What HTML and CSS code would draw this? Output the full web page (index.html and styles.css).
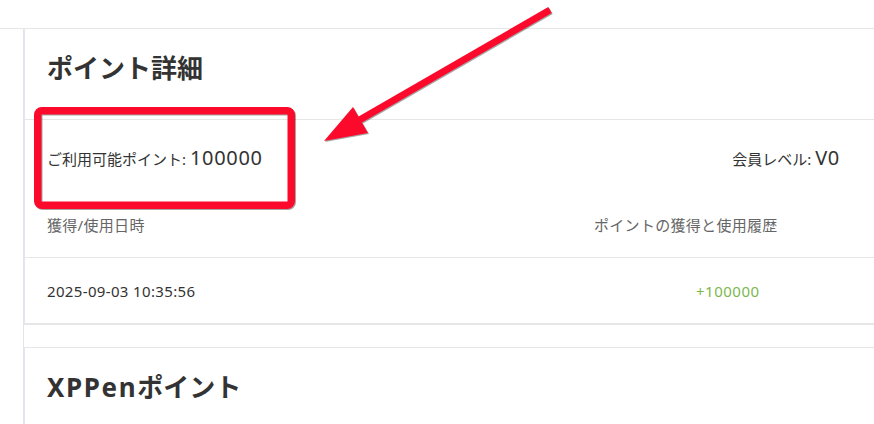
FILE: index.html
```html
<!DOCTYPE html>
<html lang="ja">
<head>
  <meta charset="UTF-8">
  <meta name="viewport" content="width=device-width, initial-scale=1.0">
  <title>ポイント詳細</title>
  <link rel="stylesheet" href="styles.css">
</head>
<body>
  <div class="topbar"></div>

  <div class="layout">
    <main class="main">
      <!-- Point details -->
      <section class="card card-first">
        <div class="card-head">
          <h2>ポイント詳細</h2>
        </div>
        <div class="summary">
          <div class="summary-item">ご利用可能ポイント: <span class="big">100000</span></div>
          <div class="summary-item">会員レベル: <span class="big">V0</span></div>
        </div>
        <div class="history-row history-head">
          <div>獲得/使用日時</div>
          <div>ポイントの獲得と使用履歴</div>
        </div>
        <div class="history-row">
          <div class="date">2025-09-03 10:35:56</div>
          <div class="amount plus">+100000</div>
        </div>
      </section>

      <section class="card">
        <div class="card-head">
          <h2><span class="brand">XPPen</span>ポイント</h2>
        </div>
      </section>
    </main>
  </div>

  <!-- Screenshot annotation -->
  <svg class="annotation" width="874" height="424" viewBox="0 0 874 424">
    <rect x="37.75" y="110.75" width="253.5" height="94.5" rx="4" fill="none" stroke="#fc0a2c" stroke-width="7.5"/>
    <line x1="550" y1="10" x2="356" y2="122" stroke="#fc0a2c" stroke-width="7"/>
    <polygon points="324,141 353,107 368,133" fill="#fc0a2c"/>
  </svg>
</body>
</html>
```

FILE: styles.css
```css
body {
  margin: 0;
  padding: 0;
  font-family: "Noto Sans", "Noto Sans CJK JP", sans-serif;
  background-color: #fff;
  color: #333;
  overflow: hidden;
}

.topbar {
  height: 28px;
  border-bottom: 1px solid #e6e6e6;
}

.layout {
  padding-left: 23px;
}

.main {
  border-left: 1px solid #e1e5ea;
  min-height: 395px;
}

.card {
  border-top: 1px solid #e6e6e6;
  border-left: 1px solid #e3e6ea;
  border-bottom: 1px solid #e6e6e6;
  margin-bottom: 22px;
}

.card-first {
  border-top: none;
}

.card-head {
  padding: 21px 34px 33px 22px;
  border-bottom: 1px solid #e6e6e6;
}

.card-head h2 {
  margin: 0;
  font-size: 26px;
  line-height: 36px;
  font-weight: 700;
  color: #333;
}

.brand {
  letter-spacing: 1.6px;
}

/* Summary line */
.summary {
  height: 71px;
  padding: 3px 34px 0 22px;
  box-sizing: border-box;
  display: flex;
  justify-content: space-between;
  align-items: center;
  font-size: 15px;
  color: #333;
}

.big {
  font-size: 20px;
  letter-spacing: 0.7px;
}

/* History table */
.history-row {
  display: grid;
  grid-template-columns: 1fr 246px;
  align-items: center;
  height: 66px;
  padding: 1px 34px 0 22px;
  box-sizing: border-box;
  font-size: 15px;
  border-bottom: 1px solid #e6e6e6;
}

.history-head {
  height: 67px;
  padding-top: 0;
  color: #666;
  letter-spacing: 0.3px;
}

.date {
  color: #333;
  letter-spacing: 0.35px;
}

.amount {
  padding-left: 102px;
  letter-spacing: 0.5px;
}

.plus {
  color: #7cb84e;
}

.annotation {
  position: absolute;
  top: 0;
  left: 0;
  pointer-events: none;
  filter: drop-shadow(1px 1px 0.6px rgba(0, 0, 0, 0.35));
}
```
